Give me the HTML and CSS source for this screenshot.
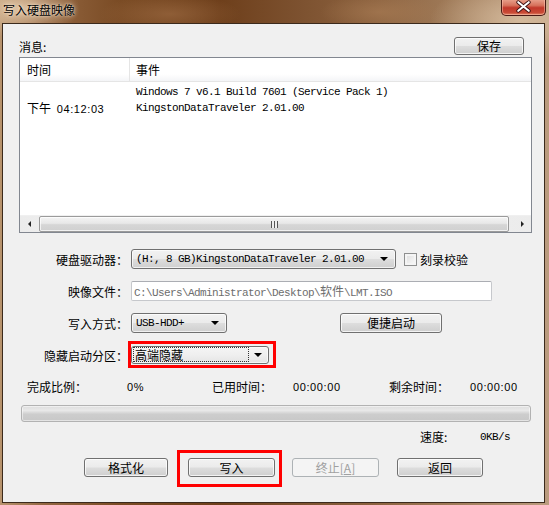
FILE: index.html
```html
<!DOCTYPE html>
<html lang="zh-CN">
<head>
<meta charset="utf-8">
<title>写入硬盘映像</title>
<link rel="stylesheet" href="styles.css">
</head>
<body>
<div class="window">
  <div class="titlebar">
    <span class="title">写入硬盘映像</span>
    <span class="close">
      <svg width="45" height="17" viewBox="0 0 45 17">
        <path d="M17 4 L28 13 M28 4 L17 13" stroke="#3a1010" stroke-width="4" stroke-linecap="round"/>
        <path d="M17 4 L28 13 M28 4 L17 13" stroke="#ffffff" stroke-width="2.2" stroke-linecap="round"/>
      </svg>
    </span>
  </div>
  <div class="client">
    <div class="msg-head">
      <span>消息:</span>
      <span class="btn save">保存</span>
    </div>
    <div class="listbox">
      <div class="lv-head">
        <div class="c1">时间</div>
        <div class="c2">事件</div>
      </div>
      <div class="lv-body">
        <div class="lv-row"><div class="c1"></div><div class="c2 mono">Windows 7 v6.1 Build 7601 (Service Pack 1)</div></div>
        <div class="lv-row"><div class="c1">下午 <span class="num time">04:12:03</span></div><div class="c2 mono">KingstonDataTraveler 2.01.00</div></div>
      </div>
      <div class="hscroll">
        <span class="arrow left"></span>
        <span class="thumb"><span class="grip"></span></span>
        <span class="arrow right"></span>
      </div>
    </div>

    <div class="form">
      <div class="frow r1">
        <label class="lbl">硬盘驱动器：</label>
        <span class="combo w-drive"><span class="val mono">(H:, 8 GB)KingstonDataTraveler 2.01.00</span><span class="tri"></span></span>
        <span class="check"></span><span class="check-lbl">刻录校验</span>
      </div>
      <div class="frow r2">
        <label class="lbl">映像文件：</label>
        <span class="edit mono">C:\Users\Administrator\Desktop\<span class="cjk">软件</span>\LMT.ISO</span>
      </div>
      <div class="frow r3">
        <label class="lbl">写入方式：</label>
        <span class="combo w-mode"><span class="val mono">USB-HDD+</span><span class="tri"></span></span>
        <span class="btn quick">便捷启动</span>
      </div>
      <div class="frow r4">
        <label class="lbl">隐藏启动分区：</label>
        <span class="hl-wrap">
          <span class="combo w-hide focus"><span class="val"><span class="focus-rect">高端隐藏</span></span><span class="tri"></span></span>
          <span class="hl hl-combo"></span>
        </span>
      </div>
    </div>

    <div class="stats">
      <span class="s1">完成比例：</span>
      <span class="s2 num">0%</span>
      <span class="s3">已用时间：</span>
      <span class="s4 num">00:00:00</span>
      <span class="s5">剩余时间：</span>
      <span class="s6 num">00:00:00</span>
    </div>

    <div class="progress"></div>

    <div class="speed">
      <span class="sp1">速度:</span>
      <span class="sp2 mono">0KB/s</span>
    </div>

    <div class="buttons">
      <span class="btn b-fmt">格式化</span>
      <span class="hl-wrap b-write">
        <span class="btn bb">写入</span>
        <span class="hl hl-btn"></span>
      </span>
      <span class="btn bb b-stop disabled">终止[<u>A</u>]</span>
      <span class="btn bb b-back">返回</span>
    </div>
  </div>
</div>
</body>
</html>
```

FILE: styles.css
```css
* { box-sizing: border-box; }
html, body { margin: 0; padding: 0; }
body {
  width: 549px;
  height: 505px;
  overflow: hidden;
  font-family: "Noto Sans CJK SC", "Noto Sans", sans-serif;
  font-size: 12px;
  color: #000;
}

.window {
  width: 549px;
  height: 505px;
  display: flex;
  flex-direction: column;
  padding: 0 4px 2px 2px;
  background:
    radial-gradient(ellipse 60px 30px at 20px 8px, rgba(235, 210, 180, 0.75), rgba(235, 210, 180, 0) 100%),
    radial-gradient(ellipse 90px 40px at 520px 20px, rgba(220, 195, 165, 0.8), rgba(220, 195, 165, 0) 100%),
    radial-gradient(ellipse 70px 20px at 170px 14px, rgba(160, 110, 70, 0.6), rgba(160, 110, 70, 0) 100%),
    radial-gradient(ellipse 60px 18px at 380px 12px, rgba(170, 125, 85, 0.6), rgba(170, 125, 85, 0) 100%),
    linear-gradient(90deg, #b8946e 0%, #936641 8%, #7a4b24 22%, #6e3f1b 40%, #7d5230 55%, #8c623f 68%, #9f7a58 82%, #bb9c7f 100%);
}

.titlebar {
  height: 23px;
  display: flex;
  justify-content: space-between;
  align-items: flex-start;
  flex: none;
}
.title {
  padding: 2px 0 0 1px;
  font-size: 12px;
  line-height: 16px;
  color: #000;
  text-shadow: 0 0 5px rgba(255, 240, 220, 0.9), 0 0 2px rgba(255, 240, 220, 0.8);
}
.close {
  width: 45px;
  height: 17px;
  margin-top: -1px;
  margin-right: -1px;
  border: 1px solid #4a1a14;
  border-top: none;
  border-radius: 0 0 5px 5px;
  background: linear-gradient(#e9a48f 0%, #d7725c 40%, #c1382a 55%, #c94a36 85%, #e08a6a 100%);
  box-shadow: inset 0 0 0 1px rgba(255, 200, 180, 0.5);
  display: flex;
}
.close svg { display: block; margin-top: -1px; }

.client {
  flex: 1;
  background: #f0f0f0;
  border: 1px solid #3b2a1c;
  display: flex;
  flex-direction: column;
}

.mono {
  font-family: "Liberation Mono", "DejaVu Sans Mono", monospace;
  font-size: 11px;
  letter-spacing: -0.6px;
}
.cjk {
  font-family: "Noto Sans CJK SC", sans-serif;
  font-size: 12px;
  letter-spacing: 0;
}
.num {
  font-family: "Liberation Sans", "DejaVu Sans", sans-serif;
  font-size: 11px;
  letter-spacing: 0.6px;
}
.time { margin-left: 3px; }

/* buttons */
.btn {
  display: inline-flex;
  align-items: center;
  justify-content: center;
  border: 1px solid #707070;
  border-radius: 3px;
  background: linear-gradient(#f2f2f2 0%, #ebebeb 48%, #dddddd 52%, #cfcfcf 100%);
  box-shadow: inset 0 0 0 1px rgba(255, 255, 255, 0.75);
  font-size: 12px;
  line-height: 14px;
  color: #000;
}
.btn.disabled {
  border-color: #adb2b5;
  background: #f4f4f4;
  color: #a0a0a0;
  box-shadow: none;
}
.btn.disabled u { text-decoration: underline; }

.msg-head {
  margin: 13px 0 0 16px;
  width: 513px;
  height: 18px;
  padding-right: 8px;
  display: flex;
  justify-content: space-between;
  align-items: center;
}
.save { width: 70px; height: 18px; }

/* list view */
.listbox {
  margin: 2px 0 0 16px;
  width: 513px;
  height: 176px;
  border: 1px solid #828790;
  background: #fff;
  display: flex;
  flex-direction: column;
}
.lv-head {
  height: 24px;
  flex: none;
  display: flex;
  background: linear-gradient(#ffffff 0%, #ffffff 70%, #f4f5f7 100%);
  border-bottom: 1px solid #e5e5e5;
}
.lv-head .c1, .lv-head .c2 {
  line-height: 22px;
  padding-top: 1px;
}
.c1 { width: 110px; padding-left: 7px; flex: none; }
.c2 { flex: 1; padding-left: 6px; }
.lv-head .c1 { border-right: 1px solid #e5e5e5; }
.lv-body { flex: 1; padding-top: 2px; }
.lv-row { display: flex; height: 16px; line-height: 16px; }

.hscroll {
  height: 17px;
  flex: none;
  display: flex;
  align-items: center;
  background: linear-gradient(90deg, #ececec, #f6f6f6 50%, #ececec);
  border-top: 1px solid #f0f0f0;
}
.arrow {
  width: 17px;
  height: 17px;
  flex: none;
  position: relative;
}
.arrow::after {
  content: "";
  position: absolute;
  top: 5px;
  width: 0;
  height: 0;
  border-top: 3.5px solid transparent;
  border-bottom: 3.5px solid transparent;
}
.arrow.left::after { left: 8px; border-right: 3px solid #222; }
.arrow.right::after { left: 7px; border-left: 3px solid #222; }
.thumb {
  flex: 1;
  height: 16px;
  margin: 0 5px 0 2px;
  border: 1px solid #9b9b9b;
  border-radius: 2px;
  background: linear-gradient(#f4f4f4 0%, #e8e8e8 45%, #d6d6d6 55%, #d0d0d0 100%);
  box-shadow: inset 0 0 0 1px rgba(255, 255, 255, 0.7);
  display: flex;
  align-items: center;
  justify-content: center;
}
.grip {
  width: 7px;
  height: 7px;
  background: repeating-linear-gradient(90deg, #555 0, #555 1px, #eee 1px, #eee 3px);
}

/* form */
.form { margin-top: 16px; display: flex; flex-direction: column; }
.frow { display: flex; align-items: center; }
.frow.r2, .frow.r3 { margin-top: 12px; }
.frow.r4 { margin-top: 13px; }
.lbl {
  width: 125px;
  text-align: right;
  margin-right: 3px;
  flex: none;
}

.combo {
  height: 20px;
  display: inline-flex;
  align-items: center;
  justify-content: space-between;
  border: 1px solid #707070;
  border-radius: 3px;
  background: linear-gradient(#f2f2f2 0%, #ebebeb 48%, #dddddd 52%, #cfcfcf 100%);
  box-shadow: inset 0 0 0 1px rgba(255, 255, 255, 0.7);
  padding: 0 7px 0 4px;
}
.combo .val { white-space: nowrap; line-height: 16px; }
.tri {
  width: 0; height: 0;
  border-left: 4px solid transparent;
  border-right: 4px solid transparent;
  border-top: 4px solid #000;
}
.w-drive { width: 265px; }
.w-mode { width: 96px; }
.w-hide {
  width: 138px;
  height: 18px;
  padding: 0 6px 0 2px;
  background: linear-gradient(#f5f5f5 0%, #efefef 50%, #e4e4e4 100%);
}
.focus-rect {
  display: inline-block;
  width: 114px;
  line-height: 13px;
  padding: 0 1px;
  outline: 1px dotted #333;
  font-size: 12px;
}

.check {
  width: 13px;
  height: 13px;
  margin-left: 8px;
  border: 1px solid #8e8f8f;
  background: linear-gradient(135deg, #dcdcdc, #fbfbfb);
  box-shadow: inset 0 0 0 2px #f4f4f4;
}
.check-lbl { margin-left: 3px; }

.edit {
  width: 361px;
  height: 20px;
  border: 1px solid #c6c8cc;
  border-top-color: #abadb3;
  border-radius: 2px;
  background: #fff;
  color: #6d6d6d;
  padding-left: 2px;
  line-height: 18px;
  white-space: nowrap;
}
.quick { width: 102px; height: 20px; margin-left: 113px; }

.hl-wrap { position: relative; display: inline-flex; }
.hl {
  position: absolute;
  border: 3px solid #ff0000;
  pointer-events: none;
}
.hl-combo { left: -3px; top: -5px; right: -7px; bottom: -4px; }
.hl-btn { left: -11px; top: -8px; right: -7px; bottom: -10px; }

/* stats */
.stats {
  margin-top: 15px;
  height: 16px;
  line-height: 16px;
  display: flex;
  padding-left: 24px;
}
.s1 { width: 100px; }
.s2 { width: 85px; }
.s3 { width: 81px; }
.s4 { width: 96px; }
.s5 { width: 81px; }

.progress {
  margin: 10px 0 0 18px;
  width: 510px;
  height: 17px;
  border: 1px solid #b2b2b2;
  border-radius: 3px;
  background: linear-gradient(#dedede 0%, #e8e8e8 30%, #cdcdcd 55%, #c8c8c8 100%);
  box-shadow: inset 0 0 0 1px rgba(255, 255, 255, 0.5);
}

.speed {
  margin-top: 7px;
  height: 16px;
  line-height: 16px;
  display: flex;
  padding-left: 417px;
}
.sp1 { width: 60px; }

.buttons {
  margin-top: 13px;
  padding-left: 81px;
  display: flex;
}
.b-fmt { width: 84px; height: 19px; }
.bb { width: 87px; height: 19px; }
.b-write { margin-left: 20px; }
.b-stop { margin-left: 17px; }
.b-back { margin-left: 18px; width: 86px; }
```
